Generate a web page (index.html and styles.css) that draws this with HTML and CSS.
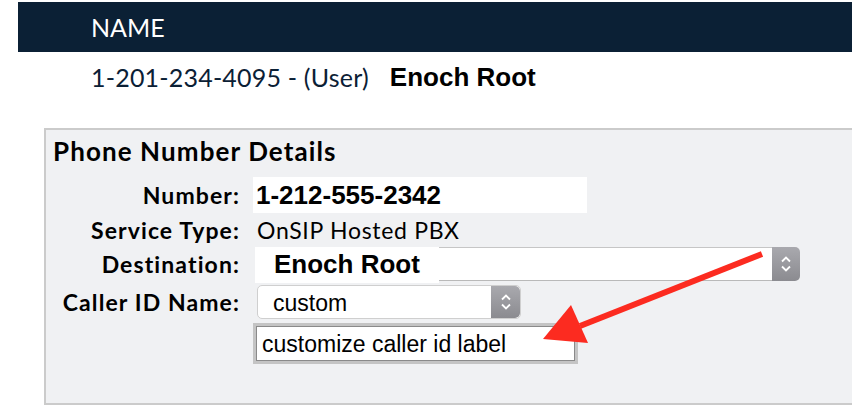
FILE: index.html
```html
<!DOCTYPE html>
<html lang="en">

<head>
    <meta charset="UTF-8">
    <meta name="viewport" content="width=device-width, initial-scale=1.0">
    <title>Phone Number Details</title>
    <link rel="stylesheet" href="styles.css">
</head>

<body>
    <div id="name_header">NAME</div>

    <div id="user_row">
        <span class="user_number">1-201-234-4095 - (User)</span>
        <span class="user_name">Enoch Root</span>
    </div>

    <div id="details_panel">
        <h3>Phone Number Details</h3>
        <div class="details_grid">
            <label class="row_number">Number:</label>
            <div class="number_box row_number">1-212-555-2342</div>

            <label class="row_service">Service Type:</label>
            <div class="service_value row_service">OnSIP Hosted PBX</div>

            <label class="row_dest">Destination:</label>
            <div class="dest_select row_dest">
                <span class="dest_name">Enoch Root</span>
                <span class="dest_fill"></span>
                <span class="stepper">
                    <svg width="14" height="22" viewBox="0 0 14 22">
                        <path d="M3 8.5 L7 4.5 L11 8.5 M3 13.5 L7 17.5 L11 13.5" fill="none" stroke="#fff" stroke-width="1.8"/>
                    </svg>
                </span>
            </div>

            <label class="row_caller">Caller ID Name:</label>
            <div class="caller_select row_caller">
                <span class="caller_value">custom</span>
                <span class="stepper">
                    <svg width="14" height="22" viewBox="0 0 14 22">
                        <path d="M3 8.5 L7 4.5 L11 8.5 M3 13.5 L7 17.5 L11 13.5" fill="none" stroke="#fff" stroke-width="1.8"/>
                    </svg>
                </span>
            </div>

            <span class="row_input"></span>
            <div class="row_input">
                <input type="text" id="caller_label" value="customize caller id label">
            </div>
        </div>
    </div>

    <!-- annotation arrow drawn over the form -->
    <svg id="annotation" width="852" height="412" viewBox="0 0 852 412">
        <line x1="762" y1="254" x2="580" y2="326" stroke="#fc2b20" stroke-width="6"/>
        <polygon points="543,339 571,305 588,343" fill="#fc2b20"/>
    </svg>
</body>

</html>
```

FILE: styles.css
```css
body {
    margin: 0;
    background: #fff;
    font-family: Lato, 'Open Sans', sans-serif;
    overflow: hidden;
    width: 852px;
    height: 412px;
    position: relative;
}

#name_header {
    margin: 2px 0 0 18px;
    height: 50px;
    background-color: #0b2035;
    color: #fff;
    font-size: 25px;
    line-height: 50px;
    padding-left: 73px;
}

#user_row {
    height: 50px;
    padding-left: 91px;
    display: flex;
    align-items: center;
    gap: 21px;
}

.user_number {
    color: #0b2035;
    font-size: 25px;
    letter-spacing: 0.2px;
}

.user_name {
    font-family: 'Liberation Sans', Arial, sans-serif;
    font-weight: bold;
    font-size: 26px;
    color: #000;
}

/* panel runs off the right edge, so no right border */
#details_panel {
    margin: 26px 0 0 44px;
    width: 808px;
    height: 277px;
    box-sizing: border-box;
    border: 2px solid #cbcbcb;
    border-right: none;
    background-color: #f0f1f3;
    padding: 0 7px;
}

#details_panel h3 {
    margin: 0;
    padding-top: 5px;
    height: 42px;
    font-size: 26px;
    letter-spacing: 1.1px;
    font-weight: bold;
    color: #000;
}

.details_grid {
    display: grid;
    grid-template-columns: 187px 1fr;
    grid-template-rows: 36px 33px 36px 40px 42px;
    column-gap: 13px;
    align-items: center;
}

.details_grid label {
    text-align: right;
    font-weight: bold;
    font-size: 23px;
    letter-spacing: 1.1px;
    color: #000;
}

.number_box {
    width: 334px;
    height: 36px;
    background: #fff;
    box-sizing: border-box;
    padding-left: 3px;
    font-family: 'Liberation Sans', Arial, sans-serif;
    font-weight: bold;
    font-size: 26px;
    line-height: 36px;
}

.service_value {
    font-size: 23px;
    letter-spacing: 0.7px;
    padding-left: 4px;
}

.dest_select {
    display: flex;
    width: 545px;
    height: 34px;
    margin-left: 2px;
}

.dest_name {
    width: 184px;
    height: 36px;
    background: #fff;
    box-sizing: border-box;
    padding-left: 19px;
    font-family: 'Liberation Sans', Arial, sans-serif;
    font-weight: bold;
    font-size: 26px;
    line-height: 34px;
}

.dest_fill {
    flex: 1;
    background: #fff;
    border-top: 1px solid #c6c6c6;
    border-bottom: 1px solid #b9b9b9;
}

.stepper {
    width: 28px;
    background: linear-gradient(to bottom, #a9a9ae, #8b8b90);
    border-radius: 0 5px 5px 0;
    display: flex;
    align-items: center;
    justify-content: center;
}

.caller_select {
    display: flex;
    width: 264px;
    height: 34px;
    margin-left: 4px;
    background: #fff;
    border: 1px solid #cfcfcf;
    border-radius: 5px;
    box-sizing: border-box;
    overflow: hidden;
}

.caller_value {
    flex: 1;
    padding-left: 15px;
    font-family: 'Liberation Sans', Arial, sans-serif;
    font-size: 23px;
    line-height: 34px;
}

.caller_select .stepper {
    width: 29px;
}

#caller_label {
    margin-left: 3px;
    width: 319px;
    height: 35px;
    box-sizing: border-box;
    border: 1px solid #8a8a8a;
    box-shadow: 0 0 0 3px #c4c4c4;
    padding: 2px 5px 0;
    font-family: 'Liberation Sans', Arial, sans-serif;
    font-size: 23px;
    color: #000;
    outline: none;
}

#annotation {
    position: absolute;
    top: 0;
    left: 0;
    pointer-events: none;
}
```
